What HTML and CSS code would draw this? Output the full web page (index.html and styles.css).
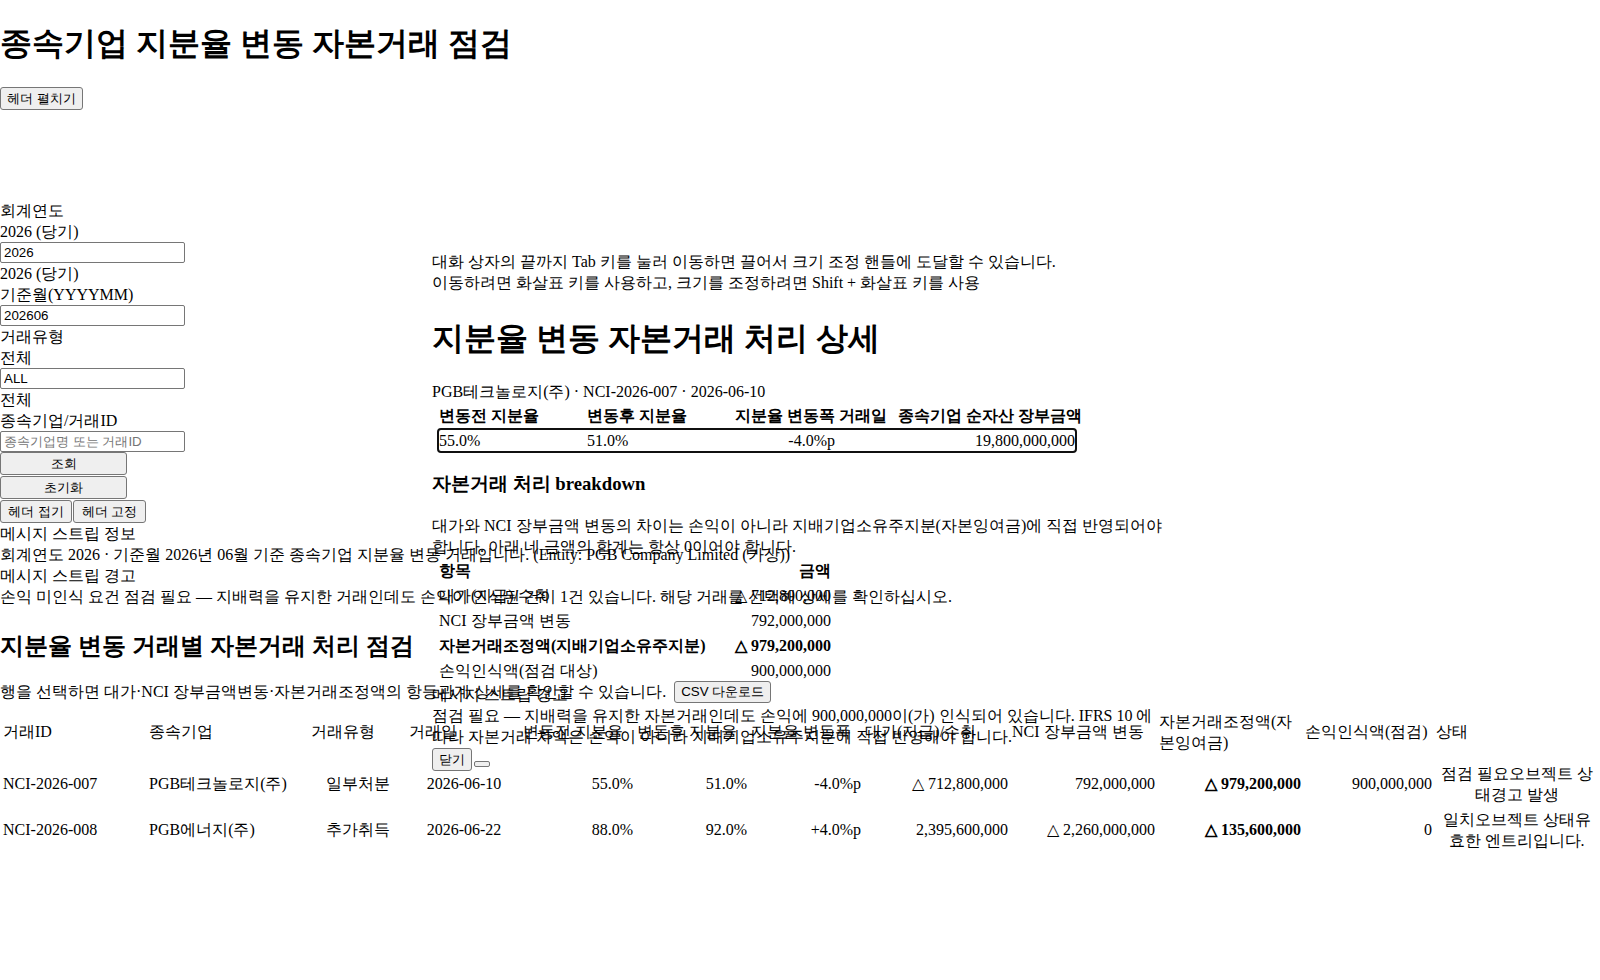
FILE: index.html
```html
<!DOCTYPE html>
<html>
<head>
<meta charset="utf-8">
<title>종속기업 지분율 변동 자본거래 점검</title>
<link rel="stylesheet" href="styles.css">
</head>
<body>
<div class="page">
  <header class="head">
    <h1 class="title">종속기업 지분율 변동 자본거래 점검</h1>
    <div class="head-actions"><button class="btn" type="button">헤더 펼치기</button></div>
  </header>

  <section class="filters">
    <div class="field">
      <div class="line">회계연도</div>
      <div class="line">2026 (당기)</div>
      <input class="inp" type="text" value="2026">
      <div class="line">2026 (당기)</div>
    </div>
    <div class="field">
      <div class="line">기준월(YYYYMM)</div>
      <input class="inp" type="text" value="202606">
    </div>
    <div class="field">
      <div class="line">거래유형</div>
      <div class="line">전체</div>
      <input class="inp" type="text" value="ALL">
      <div class="line">전체</div>
    </div>
    <div class="field">
      <div class="line">종속기업/거래ID</div>
      <input class="inp" type="text" placeholder="종속기업명 또는 거래ID">
    </div>
    <button class="btn btn-block" type="button">조회</button>
    <button class="btn btn-block" type="button">초기화</button>
    <div class="pair">
      <button class="btn btn-fold" type="button">헤더 접기</button>
      <button class="btn btn-pin" type="button">헤더 고정</button>
    </div>
  </section>

  <section class="messages">
    <div class="line">메시지 스트립 정보</div>
    <div class="line">회계연도 2026 · 기준월 2026년 06월 기준 종속기업 지분율 변동 거래입니다. (Entity: PGB Company Limited (가상))</div>
    <div class="line">메시지 스트립 경고</div>
    <div class="line">손익 미인식 요건 점검 필요 — 지배력을 유지한 거래인데도 손익이 인식된 건이 1건 있습니다. 해당 거래를 선택해 상세를 확인하십시오.</div>
  </section>

  <section class="list">
    <h2 class="section-title">지분율 변동 거래별 자본거래 처리 점검</h2>
    <div class="toolbar">
      <span>행을 선택하면 대가·NCI 장부금액변동·자본거래조정액의 항등관계 상세를 확인할 수 있습니다.</span>
      <button class="btn" type="button">CSV 다운로드</button>
    </div>
    <table class="grid">
      <colgroup>
        <col class="c-id"><col class="c-co"><col class="c-type"><col class="c-date">
        <col class="c-pct"><col class="c-pct"><col class="c-pct">
        <col class="c-amt"><col class="c-amt"><col class="c-adj"><col class="c-pl"><col class="c-st">
      </colgroup>
      <thead>
        <tr>
          <th>거래ID</th><th>종속기업</th><th>거래유형</th><th>거래일</th>
          <th>변동전 지분율</th><th>변동후 지분율</th><th>지분율 변동폭</th>
          <th>대가(지급)/수취</th><th>NCI 장부금액 변동</th><th>자본거래조정액(자본잉여금)</th>
          <th>손익인식액(점검)</th><th>상태</th>
        </tr>
      </thead>
      <tbody>
        <tr>
          <td>NCI-2026-007</td><td>PGB테크놀로지(주)</td><td class="ctr">일부처분</td><td class="ctr">2026-06-10</td>
          <td class="num">55.0%</td><td class="num">51.0%</td><td class="num">-4.0%p</td>
          <td class="num">△ 712,800,000</td><td class="num">792,000,000</td><td class="num"><b>△ 979,200,000</b></td>
          <td class="num">900,000,000</td><td class="ctr">점검 필요오브젝트 상태경고 발생</td>
        </tr>
        <tr>
          <td>NCI-2026-008</td><td>PGB에너지(주)</td><td class="ctr">추가취득</td><td class="ctr">2026-06-22</td>
          <td class="num">88.0%</td><td class="num">92.0%</td><td class="num">+4.0%p</td>
          <td class="num">2,395,600,000</td><td class="num">△ 2,260,000,000</td><td class="num"><b>△ 135,600,000</b></td>
          <td class="num">0</td><td class="ctr">일치오브젝트 상태유효한 엔트리입니다.</td>
        </tr>
      </tbody>
    </table>
  </section>
</div>

<div class="dialog" role="dialog" aria-label="지분율 변동 자본거래 처리 상세">
  <div class="line">대화 상자의 끝까지 Tab 키를 눌러 이동하면 끌어서 크기 조정 핸들에 도달할 수 있습니다.</div>
  <div class="line">이동하려면 화살표 키를 사용하고, 크기를 조정하려면 Shift + 화살표 키를 사용</div>
  <h2 class="dlg-title">지분율 변동 자본거래 처리 상세</h2>
  <div class="line">PGB테크놀로지(주) · NCI-2026-007 · 2026-06-10</div>
  <table class="kv">
    <colgroup><col class="k1"><col class="k2"><col class="k3"><col class="k4"><col class="k5"></colgroup>
    <thead>
      <tr><th>변동전 지분율</th><th>변동후 지분율</th><th>지분율 변동폭</th><th>거래일</th><th>종속기업 순자산 장부금액</th></tr>
    </thead>
    <tbody>
      <tr class="focused"><td>55.0%</td><td>51.0%</td><td class="num">-4.0%p</td><td></td><td class="num">19,800,000,000</td></tr>
    </tbody>
  </table>
  <h3 class="dlg-sub">자본거래 처리 breakdown</h3>
  <p class="note">대가와 NCI 장부금액 변동의 차이는 손익이 아니라 지배기업소유주지분(자본잉여금)에 직접 반영되어야 합니다. 아래 네 금액의 합계는 항상 0이어야 합니다.</p>
  <table class="bd">
    <colgroup><col class="b1"><col class="b2"></colgroup>
    <thead><tr><th>항목</th><th class="num">금액</th></tr></thead>
    <tbody>
      <tr><td>대가(지급)/수취</td><td class="num">△ 712,800,000</td></tr>
      <tr><td>NCI 장부금액 변동</td><td class="num">792,000,000</td></tr>
      <tr><td><b>자본거래조정액(지배기업소유주지분)</b></td><td class="num"><b>△ 979,200,000</b></td></tr>
      <tr><td>손익인식액(점검 대상)</td><td class="num">900,000,000</td></tr>
    </tbody>
  </table>
  <div class="line">메시지 스트립 경고</div>
  <div class="warn">점검 필요 — 지배력을 유지한 자본거래인데도 손익에 900,000,000이(가) 인식되어 있습니다. IFRS 10 에 따라 자본거래 차액은 손익이 아니라 지배기업소유주지분에 직접 반영해야 합니다.</div>
  <div class="dlg-foot">
    <button class="btn" type="button">닫기</button>
    <button class="btn handle" type="button" aria-label="크기 조정"></button>
  </div>
</div>
</body>
</html>
```

FILE: styles.css
```css
html, body {
  margin: 0;
  padding: 0;
  background: #fff;
}

body {
  font-family: "Liberation Serif", serif;
  font-size: 16px;
  line-height: 21px;
  color: #000;
}

.page {
  position: relative;
}

.line {
  margin: 0;
}

/* header */
.title {
  font-size: 32px;
  line-height: 38px;
  font-weight: bold;
  margin: 24px 0 0;
}

.head-actions {
  margin-top: 25px;
  height: 23px;
}

.btn {
  font-family: "Liberation Sans", sans-serif;
  font-size: 13.33px;
  line-height: 19px;
  color: #000;
  background: #efefef;
  border: 1px solid #767676;
  border-radius: 3px;
  padding: 0 6px;
  height: 23px;
  box-sizing: border-box;
  margin: 0;
  white-space: nowrap;
}

/* filters */
.filters {
  margin-top: 90px;
}

.inp {
  display: block;
  width: 185px;
  height: 21px;
  box-sizing: border-box;
  margin: 0;
  padding: 1px 3px;
  border: 1px solid #767676;
  border-radius: 2px;
  font-family: "Liberation Sans", sans-serif;
  font-size: 13.33px;
  color: #000;
  background: #fff;
}

.inp::placeholder {
  color: #757575;
}

.btn-block {
  display: block;
  width: 127px;
  margin-bottom: 1px;
}

.pair {
  display: flex;
  gap: 1px;
}

.btn-fold {
  width: 72px;
  padding: 0;
}

.btn-pin {
  width: 73px;
  padding: 0;
}

/* list section */
.section-title {
  font-size: 24px;
  line-height: 36px;
  font-weight: bold;
  margin: 21px 0 16.5px;
}

.toolbar {
  display: flex;
  align-items: center;
  gap: 8px;
  height: 22px;
}

.toolbar .btn {
  height: 22px;
}

.grid {
  margin-top: 5px;
  width: 1600px;
  table-layout: fixed;
  border-collapse: separate;
  border-spacing: 2px;
}

.grid th,
.grid td {
  padding: 1px;
  vertical-align: middle;
}

.grid th {
  font-weight: normal;
  text-align: left;
  padding-bottom: 7px;
}

.c-id { width: 144px; }
.c-co { width: 160px; }
.c-type { width: 96px; }
.c-date { width: 112px; }
.c-pct { width: 112px; }
.c-amt { width: 145px; }
.c-adj { width: 144px; }
.c-pl { width: 129px; }
.c-st { width: 163px; }

.num { text-align: right; }
.ctr { text-align: center; }

/* dialog */
.dialog {
  position: absolute;
  left: 432px;
  top: 251px;
  width: 740px;
}

.dlg-title {
  font-size: 32px;
  line-height: 37px;
  font-weight: bold;
  margin: 26.5px 0 24px;
}

.kv {
  margin-left: 4px;
  table-layout: fixed;
  width: 642px;
  border-collapse: separate;
  border-spacing: 2px;
}

.kv th,
.kv td,
.bd th,
.bd td {
  padding: 1px;
}

.kv th {
  text-align: left;
  font-weight: bold;
  white-space: nowrap;
}

.k1 { width: 146px; }
.k2 { width: 146px; }
.k3 { width: 102px; }
.k4 { width: 57px; }
.k5 { width: 179px; }

.focused {
  outline: auto 2px #101010;
}

.dlg-sub {
  font-size: 18.72px;
  line-height: 24px;
  font-weight: bold;
  margin: 18.7px 0;
}

.note {
  margin: 0;
}

.bd {
  margin-left: 4px;
  table-layout: fixed;
  width: 398px;
  border-collapse: separate;
  border-spacing: 2px;
}

.bd th {
  text-align: left;
  font-weight: bold;
}

.bd th.num {
  text-align: right;
}

.bd td {
  white-space: nowrap;
}

.b1 { width: 282px; }
.b2 { width: 110px; }

.warn {
  margin: 0;
}

.dlg-foot {
  display: flex;
  align-items: flex-start;
  margin-top: 1.5px;
}

.handle {
  width: 16px;
  height: 6px;
  padding: 0;
  margin: 13px 0 0 2px;
  border-radius: 2px;
}
```
